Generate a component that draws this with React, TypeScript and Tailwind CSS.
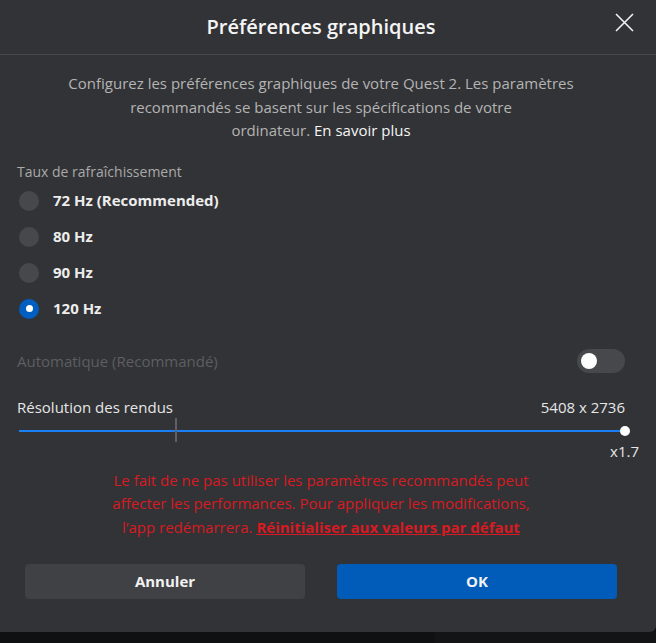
import React from "react";

const font = { fontFamily: '"Open Sans", "Noto Sans", sans-serif' };

function Radio({ label, selected }: { label: string; selected?: boolean }) {
  return (
    <div className="flex h-[36px] items-center">
      <div
        className={
          selected
            ? "ml-[2px] flex h-[20px] w-[20px] items-center justify-center rounded-full bg-[#005fc1]"
            : "ml-[2px] h-[20px] w-[20px] rounded-full bg-[#47484b]"
        }
      >
        {selected && <div className="h-[7px] w-[7px] rounded-full bg-white" />}
      </div>
      <span className="ml-[14px] text-[15px] font-bold text-[#ededed]">{label}</span>
    </div>
  );
}

export default function App() {
  return (
    <div className="relative h-[643px] w-[656px] overflow-hidden bg-[#0e1011]" style={font}>
      <div className="absolute bottom-0 right-0 h-[11px] w-[221px] bg-[#131415]" />
      <div className="relative flex h-[632px] w-[656px] flex-col rounded-br-[6px] bg-[#323336]">
        <div className="relative flex h-[55px] items-center justify-center border-b border-[#47484b]">
          <h1 className="ml-[-14px] text-[20px] font-semibold text-[#f5f5f5]">Préférences graphiques</h1>
          <svg className="absolute left-[615px] top-[13px]" width="19" height="19" viewBox="0 0 19 19">
            <path d="M1 1L18 18M18 1L1 18" stroke="#f2f2f2" strokeWidth="1.6" />
          </svg>
        </div>
        <div className="flex flex-col pl-[17px] pr-[31px]">
          <p className="mt-[17px] text-center text-[15px] leading-[23.5px] text-[#b4b4b4]">
            Configurez les préférences graphiques de votre Quest 2. Les paramètres
            <br />
            recommandés se basent sur les spécifications de votre
            <br />
            ordinateur. <span className="text-[#f5f5f5]">En savoir plus</span>
          </p>
          <div className="mt-[19px] text-[14px] leading-[20px] text-[#a9a9a9]">Taux de rafraîchissement</div>
          <div className="mt-[1px] flex flex-col">
            <Radio label="72 Hz (Recommended)" />
            <Radio label="80 Hz" />
            <Radio label="90 Hz" />
            <Radio label="120 Hz" selected />
          </div>
          <div className="mt-[22px] flex h-[24px] items-center justify-between">
            <span className="mt-[2px] text-[15px] text-[#5d5e61]">Automatique (Recommandé)</span>
            <div className="flex h-[24px] w-[48px] items-center rounded-full bg-[#47484b] pl-[4px]">
              <div className="h-[16px] w-[16px] rounded-full bg-white" />
            </div>
          </div>
          <div className="mt-[25px] flex h-[20px] items-center justify-between text-[15px] text-[#e6e6e6]">
            <span>Résolution des rendus</span>
            <span>5408 x 2736</span>
          </div>
          <div className="relative h-[24px]">
            <div className="absolute left-[2px] right-0 top-[12px] h-[2px] bg-[#1a80f5]" />
            <div className="absolute left-[158px] top-0 h-[24px] w-[2px] bg-[#5f6063]" />
            <div className="absolute right-[-5px] top-[8px] h-[10px] w-[10px] rounded-full bg-white" />
          </div>
          <div className="mr-[-14px] flex h-[20px] items-center justify-end text-[15px] text-[#e6e6e6]">x1.7</div>
          <p className="mt-[7px] text-center text-[15px] leading-[23.5px] text-[#d81a22]">
            Le fait de ne pas utiliser les paramètres recommandés peut
            <br />
            affecter les performances. Pour appliquer les modifications,
            <br />
            l’app redémarrera. <span className="font-bold underline">Réinitialiser aux valeurs par défaut</span>
          </p>
          <div className="mt-[25px] flex gap-[32px] px-[8px]">
            <button className="h-[35px] flex-1 rounded-[4px] bg-[#404144] text-[15px] font-bold text-[#f2f2f2]">
              Annuler
            </button>
            <button className="h-[35px] flex-1 rounded-[4px] bg-[#005cb8] text-[15px] font-bold text-[#f2f2f2]">
              OK
            </button>
          </div>
        </div>
      </div>
    </div>
  );
}
